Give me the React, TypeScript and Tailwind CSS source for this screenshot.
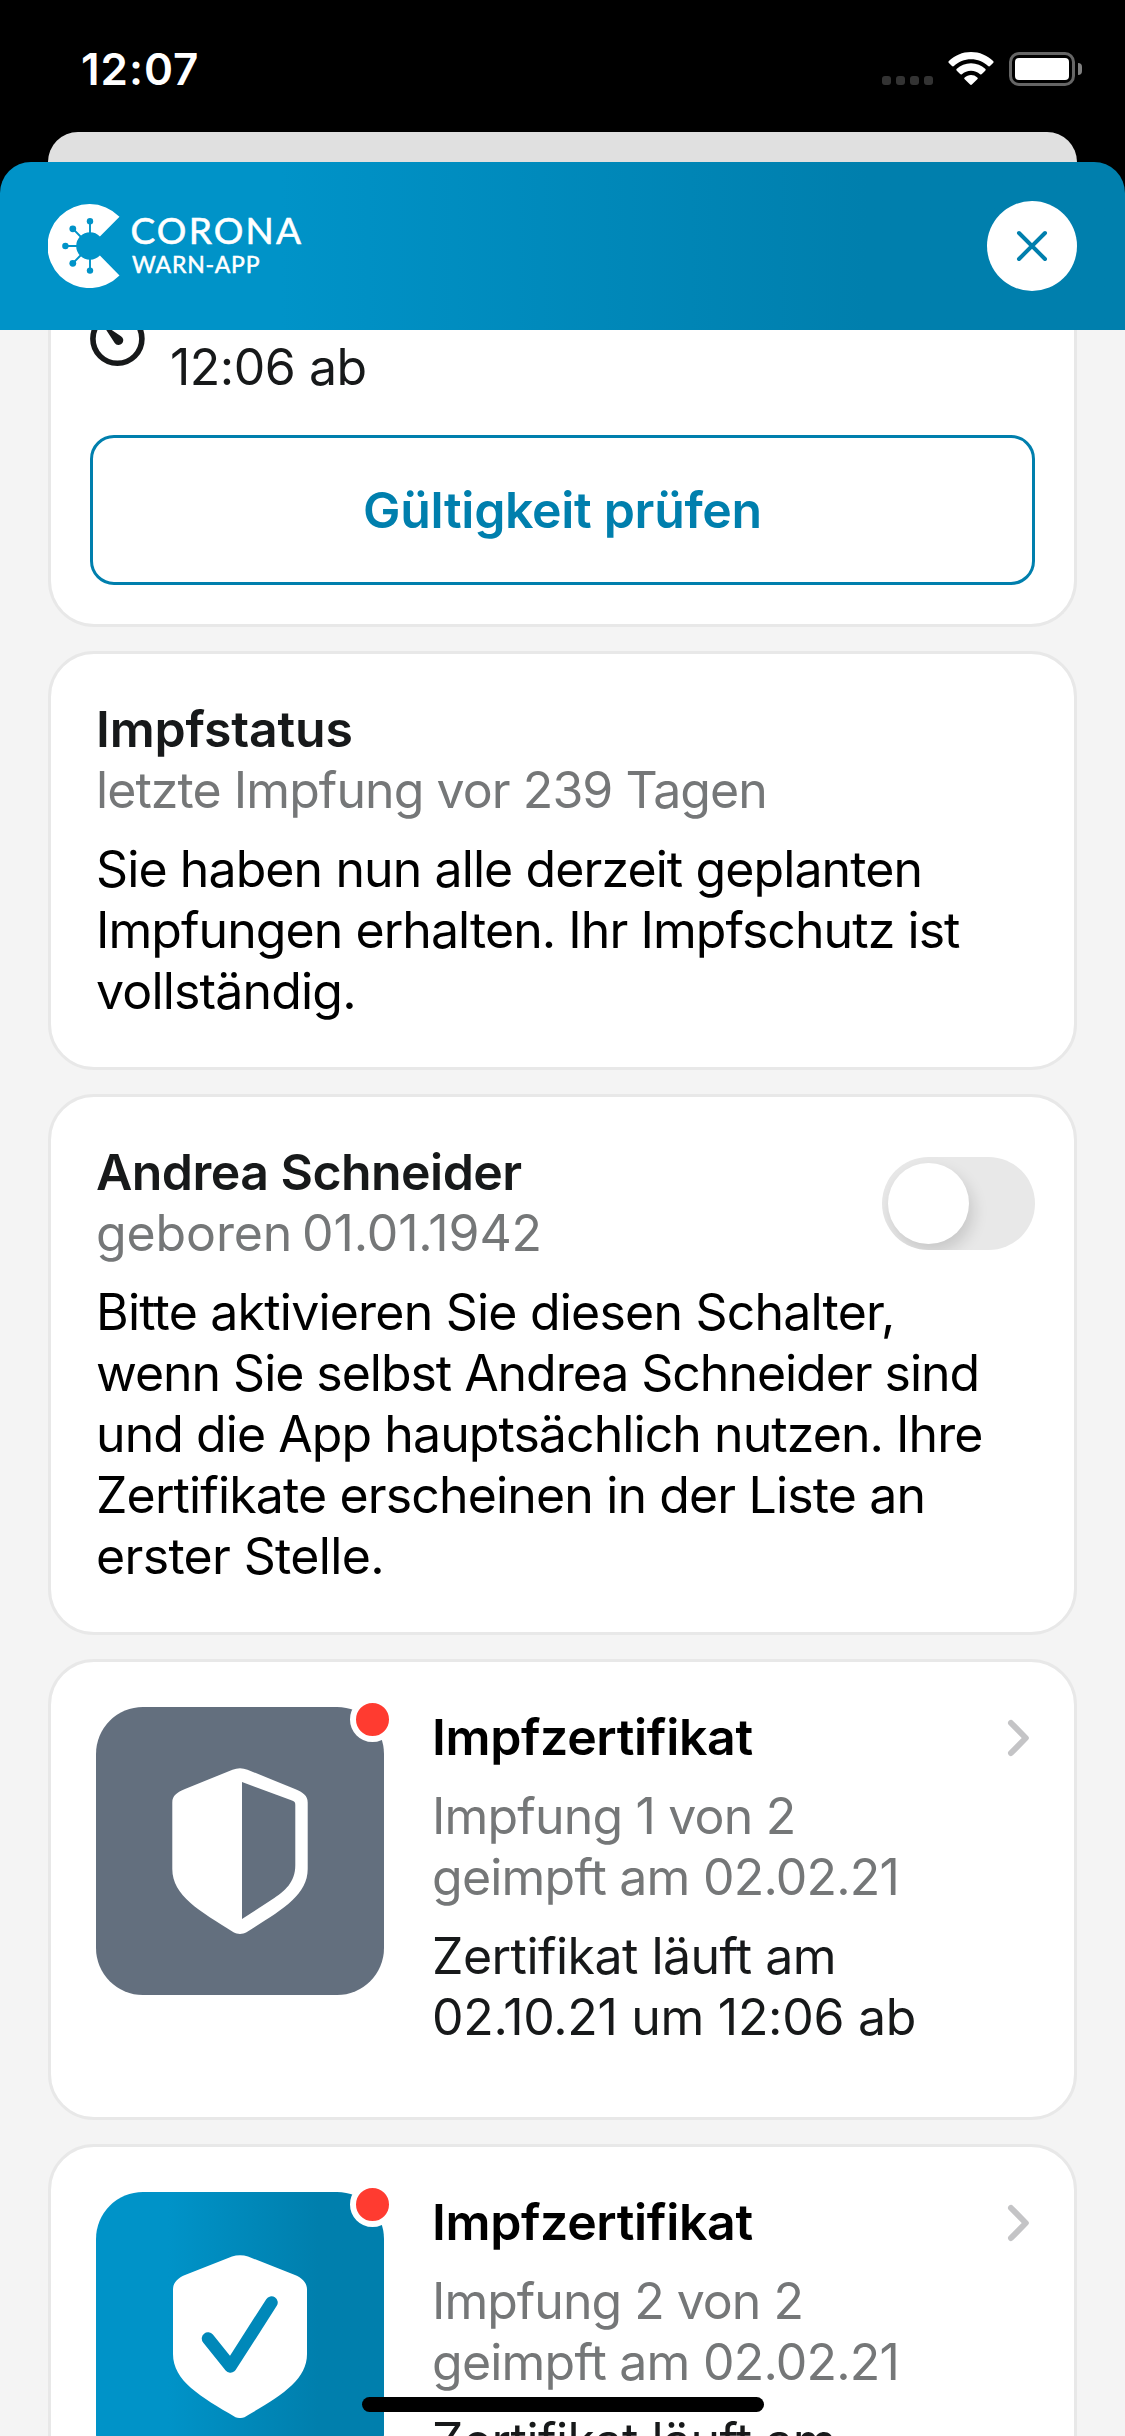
import type { ReactNode } from "react";

function WifiIcon() {
  return (
    <svg width="46" height="33" viewBox="0 0 46 33" fill="#fff">
      <path d="M23 0C14.400 0 6.700 3.400.9 8.900a1.400 1.400 0 0 0 0 2l3.100 3.200c.5.5 1.400.5 1.900 0C10.400 9.900 16.400 7.300 23 7.300s12.600 2.600 17.100 6.800c.5.5 1.400.5 1.900 0l3.100-3.200a1.400 1.400 0 0 0 0-2C39.300 3.400 31.600 0 23 0Z" />
      <path d="M23 11.300c-5.500 0-10.500 2.100-14.200 5.500a1.300 1.300 0 0 0 0 2l3.300 3.300c.5.5 1.300.5 1.800.1 2.400-2.200 5.600-3.500 9.100-3.500s6.700 1.300 9.100 3.500c.5.4 1.300.4 1.800-.1l3.300-3.300a1.300 1.300 0 0 0 0-2c-3.700-3.400-8.700-5.500-14.200-5.500Z" />
      <path d="M23 23c-2.400 0-4.600.9-6.300 2.400a1.200 1.200 0 0 0 0 1.800l5.400 5.400c.5.500 1.300.5 1.800 0l5.400-5.400a1.200 1.200 0 0 0 0-1.800A9.400 9.400 0 0 0 23 23Z" />
    </svg>
  );
}

function Battery() {
  return (
    <div className="flex items-center gap-[3px]">
      <div className="h-[34px] w-[66px] rounded-[10px] border-[3px] border-[#666] p-[3px]">
        <div className="h-full w-full rounded-[4px] bg-white" />
      </div>
      <div className="h-3 w-[4px] rounded-r-full bg-[#808080]" />
    </div>
  );
}

function StatusBar() {
  return (
    <div className="flex h-[132px] shrink-0 items-start justify-between pr-[43px] pl-[81px] text-white">
      <span className="pt-[42px] text-[44px] leading-[54px] font-semibold tracking-[0.95px]">12:07</span>
      <div className="flex items-start pt-[52px]">
        <div className="mr-[15px] flex h-[33px] items-end gap-[5px]">
          {[0, 1, 2, 3].map((dot) => (
            <span key={dot} className="size-[9px] rounded-[3px] bg-[#333]" />
          ))}
        </div>
        <div className="mr-[15px]">
          <WifiIcon />
        </div>
        <Battery />
      </div>
    </div>
  );
}

function Logo() {
  return (
    <svg width="260" height="84" viewBox="48 204 260 84">
      <path d="M119.500 216.700A42 42 0 1 0 119.500 275.500L99.900 255.600A13.800 13.800 0 1 1 99.900 236.400Z" fill="#fff" />
      <path
        d="M90 234V221M81 237L73 228.800M78 246H65M81 255L73 263.200M90 258V271"
        stroke="#0093c8"
        strokeWidth="1.900"
      />
      <g fill="#0093c8">
        <circle cx="90" cy="221.200" r="3.200" />
        <circle cx="72.800" cy="228.800" r="3.400" />
        <circle cx="65.400" cy="246" r="3.200" />
        <circle cx="72.800" cy="263.300" r="3.400" />
        <circle cx="90" cy="270.600" r="3.200" />
      </g>
      <g fill="#fff" stroke="#fff" fontFamily="Lato, sans-serif">
        <text x="130.500" y="244" fontSize="37" strokeWidth="0.600" textLength="170.500" lengthAdjust="spacing">
          CORONA
        </text>
        <text x="132" y="272.600" fontSize="23" strokeWidth="0.500" textLength="127.500" lengthAdjust="spacing">
          WARN-APP
        </text>
      </g>
    </svg>
  );
}

function Header() {
  return (
    <header className="flex h-[168px] shrink-0 items-center justify-between rounded-t-[31px] bg-linear-to-r from-[#0093c8] from-25% to-[#007fad] to-77% px-12">
      <Logo />
      <button className="flex size-[90px] items-center justify-center rounded-full bg-white">
        <svg width="32" height="32" viewBox="0 0 32 32" stroke="#007fad" strokeWidth="4" strokeLinecap="round">
          <path d="M3 3L29 29M29 3L3 29" />
        </svg>
      </button>
    </header>
  );
}

function Line({ className, children }: { className: string; children: ReactNode }) {
  return <p className={"whitespace-nowrap " + className}>{children}</p>;
}

const cardBase = "rounded-[46px] border-[3px] border-[#e8e8e8] bg-white";

function ExpiryCard() {
  return (
    <section className="rounded-b-[46px] border-x-[3px] border-b-[3px] border-[#e8e8e8] bg-white px-[39px] pb-[39px]">
      <div className="flex items-start">
        <svg width="55" height="37" viewBox="0 0 55 37">
          <circle cx="27.400" cy="8.800" r="24.500" fill="none" stroke="#17191a" strokeWidth="5.600" />
          <path d="M12 -6.500L31 6.200A4.700 4.700 0 1 1 24.700 12.900Z" fill="#17191a" />
        </svg>
        <p className="ml-[25px] pt-[7px] tracking-[-0.48px] text-[#17191a]">12:06 ab</p>
      </div>
      <button className="mt-[37px] flex h-[150px] w-full items-center justify-center rounded-[24px] border-[3px] border-[#007fad] font-semibold tracking-[-0.32px] text-[#007fad]">
        Gültigkeit prüfen
      </button>
    </section>
  );
}

function StatusCard() {
  return (
    <section className={cardBase + " p-[45px]"}>
      <h2 className="font-semibold tracking-[-0.15px] text-[#17191a]">Impfstatus</h2>
      <Line className="tracking-[-0.93px] text-[#757778]">letzte Impfung vor 239 Tagen</Line>
      <div className="mt-[18px] text-black">
        <Line className="tracking-[-0.9px]">Sie haben nun alle derzeit geplanten</Line>
        <Line className="tracking-[-0.94px]">Impfungen erhalten. Ihr Impfschutz ist</Line>
        <Line className="tracking-[-0.83px]">vollständig.</Line>
      </div>
    </section>
  );
}

function Switch() {
  return (
    <div className="mt-[15px] mr-[-6px] h-[93px] w-[153px] overflow-hidden rounded-full bg-[#e8e8e8] p-[6px]">
      <div className="size-[81px] rounded-full bg-white shadow-[4px_8px_16px_rgba(0,0,0,0.14)]" />
    </div>
  );
}

function PersonCard() {
  return (
    <section className={cardBase + " p-[45px]"}>
      <div className="flex h-[122px] items-start justify-between">
        <div>
          <h2 className="font-semibold tracking-[-0.55px] text-[#17191a]">Andrea Schneider</h2>
          <Line className="tracking-[-0.13px] [word-spacing:-4px] text-[#757778]">geboren 01.01.1942</Line>
        </div>
        <Switch />
      </div>
      <div className="mt-[18px] text-black">
        <Line className="tracking-[-0.79px]">Bitte aktivieren Sie diesen Schalter,</Line>
        <Line className="tracking-[-1.04px]">wenn Sie selbst Andrea Schneider sind</Line>
        <Line className="tracking-[-0.93px]">und die App hauptsächlich nutzen. Ihre</Line>
        <Line className="tracking-[-0.86px]">Zertifikate erscheinen in der Liste an</Line>
        <Line className="tracking-[-0.66px]">erster Stelle.</Line>
      </div>
    </section>
  );
}

function HalfShield() {
  return (
    <svg width="136" height="166" viewBox="0 0 136 166">
      <path
        fillRule="evenodd"
        fill="#fff"
        d="M60.500 1.700C65.500 -.3 70.500 -.3 75.500 1.700L123 21C131 24.400 135.700 27.500 135.700 34.500V101C135.700 128 108 143 74.500 164.200C70.500 166.500 65.500 166.500 61.500 164.200C28 143 .3 128 .3 101V34.500C.3 27.500 5 24.400 13 21ZM70 14V151L100 131.500C113 123 123.300 114.500 123.300 97V37C123.300 34.500 122.500 33.500 120 32.600Z"
      />
    </svg>
  );
}

function CheckShield() {
  return (
    <svg width="134" height="163" viewBox="0 0 134 163">
      <path
        fill="#fff"
        d="M59 1.500C64 -.3 70 -.3 75 1.500L122 20C129 23 134 27.500 134 34.500V99C134 126 106.500 141.500 71.500 162.200C68.500 163.300 65.500 163.300 62.500 162.200C27.500 141.500 0 126 0 99V34.500C0 27.500 5 23 12 20Z"
      />
      <path
        d="M35 83.500L57.500 111.500L98.500 47.500"
        fill="none"
        stroke="#0088b9"
        strokeWidth="12.500"
        strokeLinecap="round"
        strokeLinejoin="round"
      />
    </svg>
  );
}

interface CertificateProps {
  icon: ReactNode;
  iconClass: string;
  dose: ReactNode;
}

function CertificateCard({ icon, iconClass, dose }: CertificateProps) {
  return (
    <section className={cardBase + " flex items-start px-[45px] pt-[45px] pb-[69px]"}>
      <div className={"relative flex h-[288px] w-72 shrink-0 justify-center rounded-[47px] " + iconClass}>
        {icon}
        <span className="absolute -top-[10px] -right-[11px] size-[45px] rounded-full border-[6px] border-white bg-[#ff3b30]" />
      </div>
      <div className="ml-12 grow">
        <div className="flex items-start justify-between">
          <h2 className="font-semibold tracking-[-0.35px] text-black">Impfzertifikat</h2>
          <svg
            className="mt-3"
            width="22"
            height="38"
            viewBox="0 0 22 38"
            fill="none"
            stroke="#c4c4c6"
            strokeWidth="6"
            strokeLinecap="round"
            strokeLinejoin="round"
          >
            <path d="M4 4L18.800 19L4 34" />
          </svg>
        </div>
        <div className="mt-[18px] text-[#757778]">
          {dose}
          <Line className="tracking-[-0.78px]">geimpft am 02.02.21</Line>
        </div>
        <div className="mt-[18px] text-[#17191a]">
          <Line className="tracking-[-0.53px]">Zertifikat läuft am</Line>
          <Line className="tracking-[-0.3px]">02.10.21 um 12:06 ab</Line>
        </div>
      </div>
    </section>
  );
}

export default function App() {
  return (
    <div className="relative flex h-[2436px] w-[1125px] flex-col overflow-hidden bg-black font-[Inter,sans-serif] text-[50px] leading-[61px]">
      <StatusBar />
      <div className="mx-12 -mb-[30px] h-[60px] shrink-0 rounded-t-[30px] bg-[#e0e0e0]" />
      <div className="relative flex min-h-0 grow flex-col">
        <Header />
        <main className="flex min-h-0 grow flex-col gap-6 overflow-hidden bg-[#f4f4f4] px-12 *:shrink-0">
          <ExpiryCard />
          <StatusCard />
          <PersonCard />
          <CertificateCard
            iconClass="bg-[#636f7e] pt-[61px]"
            icon={<HalfShield />}
            dose={<Line className="tracking-[-0.83px]">Impfung 1 von 2</Line>}
          />
          <CertificateCard
            iconClass="bg-linear-to-r from-[#0093c8] from-25% to-[#007fad] to-77% pt-[63px]"
            icon={<CheckShield />}
            dose={<Line className="tracking-[-1px]">Impfung 2 von 2</Line>}
          />
        </main>
      </div>
      <div className="absolute bottom-6 left-[362px] h-[15px] w-[402px] rounded-full bg-black" />
    </div>
  );
}
